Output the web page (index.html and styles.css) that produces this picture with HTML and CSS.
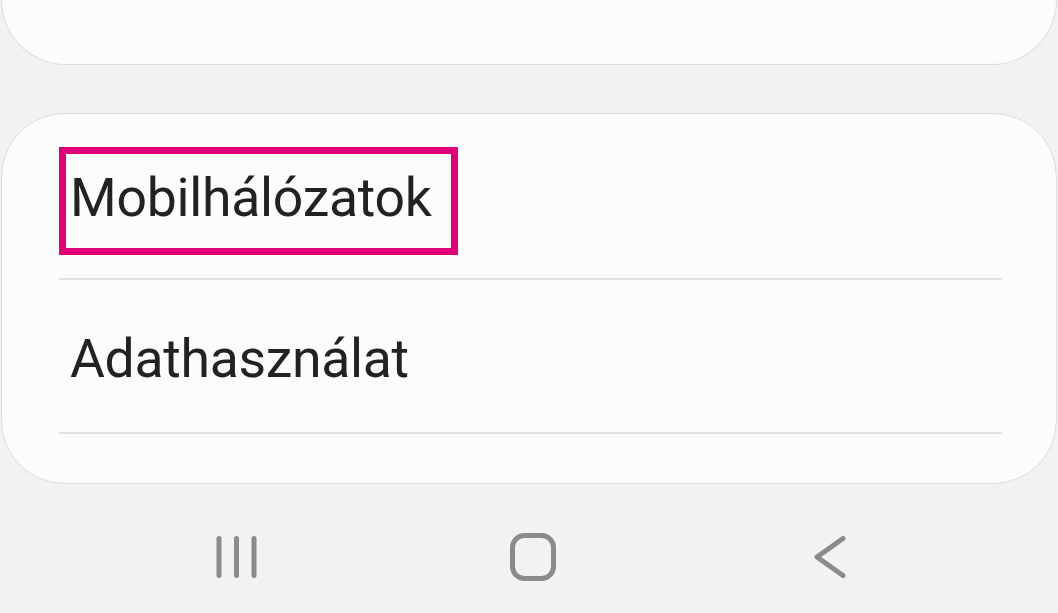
FILE: index.html
```html
<!DOCTYPE html>
<html lang="hu">
<head>
<meta charset="utf-8">
<title>Kapcsolatok</title>
<link rel="stylesheet" href="styles.css">
</head>
<body>
<div class="screen">
  <div class="card card-top"></div>
  <div class="card card-list">
    <div class="row row-first">
      <div class="highlight">Mobilhálózatok</div>
    </div>
    <div class="divider"></div>
    <div class="row row-second">
      <div class="label">Adathasználat</div>
    </div>
    <div class="divider"></div>
  </div>
  <nav class="navbar">
    <div class="nav-slot">
      <svg class="nav-icon" width="48" height="48" viewBox="0 0 48 48">
        <line x1="7" y1="5.5" x2="7" y2="42.5"/>
        <line x1="24.5" y1="5.5" x2="24.5" y2="42.5"/>
        <line x1="42" y1="5.5" x2="42" y2="42.5"/>
      </svg>
    </div>
    <div class="nav-slot">
      <svg class="nav-icon" width="48" height="50" viewBox="0 0 48 50">
        <rect x="3.5" y="3.5" width="41" height="43" rx="12" ry="12"/>
      </svg>
    </div>
    <div class="nav-slot">
      <svg class="nav-icon" width="48" height="48" viewBox="0 0 48 48">
        <polyline points="37,5.5 11,24 37,42.5"/>
      </svg>
    </div>
  </nav>
</div>
</body>
</html>
```

FILE: styles.css
```css
html, body {
  margin: 0;
  padding: 0;
}

body {
  background: #f2f2f2;
  font-family: Roboto, "Noto Sans", "Liberation Sans", sans-serif;
  color: #222222;
  width: 1058px;
  height: 613px;
  overflow: hidden;
}

.screen {
  display: flex;
  flex-direction: column;
  width: 1058px;
  height: 613px;
}

.card {
  background: #fcfcfc;
  border: 1px solid #dcdcdc;
  box-sizing: border-box;
  margin: 0 1px;
}

.card-top {
  height: 65px;
  border-top: none;
  border-radius: 0 0 68px 68px;
  flex-shrink: 0;
}

.card-list {
  margin-top: 48px;
  height: 371px;
  border-radius: 64px;
  padding: 33px 54px 0 57px;
  display: flex;
  flex-direction: column;
  flex-shrink: 0;
}

.row-first {
  height: 131px;
  display: flex;
  align-items: flex-start;
}

.highlight {
  box-sizing: border-box;
  width: 399px;
  height: 108px;
  border: 7px solid #e2007a;
  padding: 0 0 7px 4px;
  font-size: 53.5px;
  line-height: 87px;
  letter-spacing: -0.25px;
  white-space: nowrap;
}

.divider {
  height: 2px;
  background: #e1e1e1;
  flex-shrink: 0;
}

.row-second {
  height: 152px;
  box-sizing: border-box;
  padding: 5px 0 0 11px;
}

.label {
  font-size: 53.5px;
  line-height: 147px;
  letter-spacing: -0.3px;
  white-space: nowrap;
}

.navbar {
  flex: 1;
  display: flex;
  align-items: center;
  padding-left: 87px;
  padding-top: 16px;
}

.nav-slot {
  width: 297px;
  display: flex;
  justify-content: center;
}

.nav-icon {
  fill: none;
  stroke: #8b8b8b;
  stroke-width: 5;
  stroke-linecap: round;
  stroke-linejoin: round;
}
```
